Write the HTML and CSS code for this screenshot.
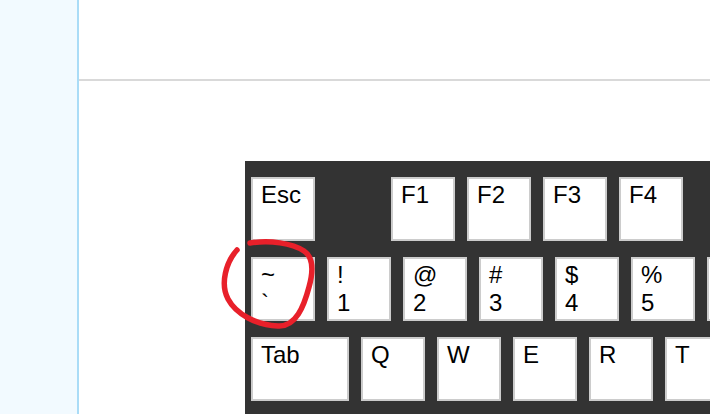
FILE: index.html
```html
<!DOCTYPE html>
<html>
<head>
<meta charset="utf-8">
<link rel="stylesheet" href="styles.css">
</head>
<body>
<div class="app">
  <aside class="sidebar"></aside>
  <main class="main">
    <header class="topbar"></header>
    <section class="content">
      <div class="keyboard">
        <div class="row">
          <div class="key">Esc</div>
          <div class="spacer"></div>
          <div class="key">F1</div>
          <div class="key">F2</div>
          <div class="key">F3</div>
          <div class="key">F4</div>
          <div class="spacer"></div>
        </div>
        <div class="row">
          <div class="key"><span>~</span><span>`</span></div>
          <div class="key"><span>!</span><span>1</span></div>
          <div class="key"><span>@</span><span>2</span></div>
          <div class="key"><span>#</span><span>3</span></div>
          <div class="key"><span>$</span><span>4</span></div>
          <div class="key"><span>%</span><span>5</span></div>
          <div class="key"></div>
        </div>
        <div class="row">
          <div class="key wide">Tab</div>
          <div class="key">Q</div>
          <div class="key">W</div>
          <div class="key">E</div>
          <div class="key">R</div>
          <div class="key">T</div>
        </div>
        <div class="row">
          <div class="key"></div>
        </div>
      </div>
      <svg class="annotation" width="110" height="100" viewBox="210 232 110 100">
        <path d="M237,250 C226,262 220,284 228,299 C236,314 256,325 278,326 C296,327 304,306 309,287 C314,269 313,257 304,251 C292,243 270,240 250,243" fill="none" stroke="#e8202a" stroke-width="5.5" stroke-linecap="round" stroke-linejoin="round"/>
      </svg>
    </section>
  </main>
</div>
</body>
</html>
```

FILE: styles.css
```css
html, body {
  margin: 0;
  padding: 0;
  height: 100%;
  overflow: hidden;
  background: #ffffff;
  font-family: "Liberation Sans", Arial, sans-serif;
}

.app {
  display: flex;
  height: 100%;
}

.sidebar {
  width: 77px;
  flex: 0 0 77px;
  background: #f2faff;
  border-right: 2px solid #aadcf7;
}

.main {
  flex: 1;
  min-width: 0;
  overflow: hidden;
  display: flex;
  flex-direction: column;
}

.topbar {
  height: 79px;
  flex: 0 0 79px;
  border-bottom: 2px solid #d9d9d9;
}

.content {
  position: relative;
  padding: 80px 0 0 166px;
}

.keyboard {
  width: max-content;
  background: #333333;
  padding: 16px 6px 16px 6px;
  display: flex;
  flex-direction: column;
  gap: 16px;
}

.row {
  display: flex;
  gap: 12px;
}

.key {
  box-sizing: border-box;
  width: 64px;
  height: 64px;
  background: #ffffff;
  border: 2px solid #cccccc;
  padding: 2px 8px;
  font-size: 24px;
  color: #000000;
  display: flex;
  flex-direction: column;
}

.key.wide {
  width: 98px;
}

.spacer {
  width: 52px;
}

.annotation {
  position: absolute;
  left: 131px;
  top: 151px;
}
```
